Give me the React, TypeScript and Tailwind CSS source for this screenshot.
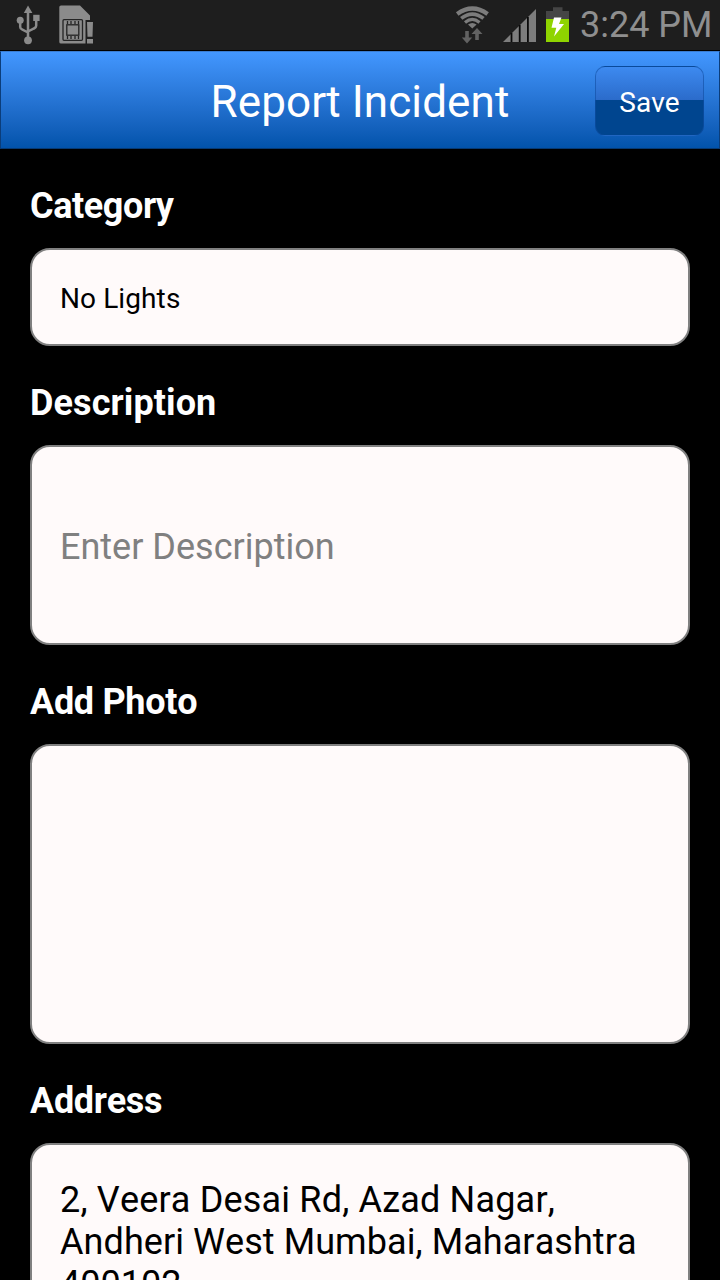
import { ReactNode } from 'react'
import clsx from 'clsx'

export default function App() {
    return (
        <div className="flex h-[1280px] w-[720px] flex-col overflow-hidden bg-black font-['Roboto',sans-serif] [font-kerning:none]">
            <StatusBar />
            <Header title="Report Incident" />
            <form className="flex flex-col px-[30px] pt-[36px]">
                <Field label="Category" className="h-[98px]" labelClassName="tracking-[-0.4px]">
                    <span className="pt-[3px] text-[28px] leading-8 tracking-[0.1px] text-black">No Lights</span>
                </Field>
                <Field label="Description" className="h-[200px]" labelClassName="tracking-[0.1px]">
                    <input
                        type="text"
                        placeholder="Enter Description"
                        className="w-full bg-transparent pt-1 text-[36px] leading-[42px] text-black outline-none placeholder:text-[#808080]"
                    />
                </Field>
                <Field label="Add Photo" className="h-[300px]" labelClassName="tracking-[-0.3px]" />
                <Field label="Address" className="h-[200px]" labelClassName="tracking-[-0.3px]">
                    <p className="pb-[2px] text-[36px] leading-[42px] text-black">
                        <span className="tracking-[0.18px]">2, Veera Desai Rd, Azad Nagar,</span><br />
                        <span className="tracking-[0.07px]">Andheri West Mumbai, Maharashtra</span><br />
                        400102
                    </p>
                </Field>
            </form>
        </div>
    )
}

function StatusBar() {
    return (
        <div className="flex h-[51px] shrink-0 items-start justify-between border-b border-black bg-[#1e1e1e] pr-[8px] pl-[14px]">
            <div className="flex gap-[16px]">
                <UsbIcon />
                <SimIcon />
            </div>
            <div className="flex">
                <WifiIcon />
                <SignalIcon />
                <BatteryIcon />
                <span className="ml-[10px] w-[132px] text-right text-[36px] leading-[50px] whitespace-nowrap text-[#8f8f8f]">3:24 PM</span>
            </div>
        </div>
    )
}

function Header({ title }: { title: string }) {
    return (
        <header className="grid h-[98px] shrink-0 grid-cols-[1fr_auto_1fr] items-center border border-t-[#3a7cd0] border-r-[#0b3d7a] border-b-[#063a75] border-l-[#0b3d7a] bg-linear-to-b from-[#4397ff] to-[#0253ab] px-[15px]">
            <h1 className="col-start-2 pt-[4px] text-[44px] leading-[52px] tracking-[0.1px] whitespace-nowrap text-white">{title}</h1>
            <button
                type="button"
                className="mt-[2px] h-[70px] w-[109px] justify-self-end rounded-[10px] border border-[#0f4fa3]/60 bg-linear-to-b from-[#3d8af0] from-0% via-[#2b6bca] via-49% to-[#00458f] to-49% pt-[4px] text-[28px] text-white"
            >
                Save
            </button>
        </header>
    )
}

function Field({ label, className, labelClassName, children }: TFieldProps) {
    return (
        <div className="mb-[36px]">
            <label className={clsx('mb-[21px] block text-[36px] leading-[42px] font-bold text-white', labelClassName)}>{label}</label>
            <div className={clsx('flex items-center rounded-[20px] border-2 border-[#808080] bg-[#fffafa] px-[28px]', className)}>
                {children}
            </div>
        </div>
    )
}

function UsbIcon() {
    return (
        <svg width="28" height="50" viewBox="14 0 28 50" fill="#8b8b8b">
            <path d="M28 5.5 32.4 13H23.8Z" />
            <path d="M28 12V40M20.2 20V27Q20.2 28.6 22 29.3L28 32.5M36.2 19V25.8Q36.2 27.5 34 28.5L28 31.5" fill="none" stroke="#8b8b8b" strokeWidth="2.5" />
            <circle cx="20.2" cy="20.2" r="3.5" />
            <rect x="33.2" y="14.8" width="6.4" height="6.2" />
            <circle cx="28" cy="40.3" r="3.9" />
        </svg>
    )
}

function SimIcon() {
    return (
        <svg width="36" height="50" viewBox="58 0 36 50">
            <path d="M61 5.5H80L90 15.5V20H85.5V43.5H61Q59.3 43.5 59.3 42V7Q59.3 5.5 61 5.5Z" fill="#8b8b8b" />
            <rect x="63" y="19.7" width="19.5" height="20.6" rx="1" fill="#8b8b8b" stroke="#242424" strokeWidth="1.3" />
            <rect x="66.8" y="24.8" width="12" height="10.4" fill="#8b8b8b" stroke="#242424" strokeWidth="1.3" />
            <path d="M67.5 21V24M71 21V24M75 21V24M78.5 21V24M67.5 36V39M71 36V39M75 36V39M78.5 36V39" stroke="#242424" strokeWidth="1.3" />
            <path d="M87 22H93L92.5 36.8H87.5ZM87 39H93V43.5H87Z" fill="#8b8b8b" />
        </svg>
    )
}

function WifiIcon() {
    return (
        <svg width="48" height="50" viewBox="455 0 48 50">
            <path d="M457.2 14Q472.3 3 487.6 14" fill="none" stroke="#7c7c7c" strokeWidth="4.3" />
            <path d="M461.2 18.4Q472.3 9.8 483.5 18.4" fill="none" stroke="#7c7c7c" strokeWidth="3.7" />
            <path d="M465 22.4Q472.3 16.4 479.5 22.4" fill="none" stroke="#7c7c7c" strokeWidth="3.2" />
            <path d="M468 24.6Q472.3 21.4 476.6 24.6L472.3 28.4Z" fill="#7c7c7c" />
            <path d="M465.2 31H468.8V37.5H472.2L467 43.5 461.8 37.5H465.2Z" fill="#626262" />
            <path d="M475.2 40V34H471.5L477 28 482.5 34H478.8V40Z" fill="#626262" />
        </svg>
    )
}

function SignalIcon() {
    return (
        <svg width="42" height="50" viewBox="503 0 42 50">
            <path d="M503 42 536 9V42Z" fill="#7d7d7d" />
            <path d="M511.5 33V42M519.7 25V42M527.9 17V42" stroke="#0a0a0a" strokeWidth="1.8" />
        </svg>
    )
}

function BatteryIcon() {
    return (
        <svg width="25" height="50" viewBox="545 0 25 50">
            <path d="M553 7.3H562.5V11H569V19H546V11H553Z" fill="#454545" />
            <path d="M546 19H569V42H546Z" fill="#8fd400" />
            <path d="M554 17.5H561.5L559 24H564L554 36.5 556.3 27.8H551.5Z" fill="#fff" />
        </svg>
    )
}

type TFieldProps = {
    label: string,
    className?: string,
    labelClassName?: string,
    children?: ReactNode
}
